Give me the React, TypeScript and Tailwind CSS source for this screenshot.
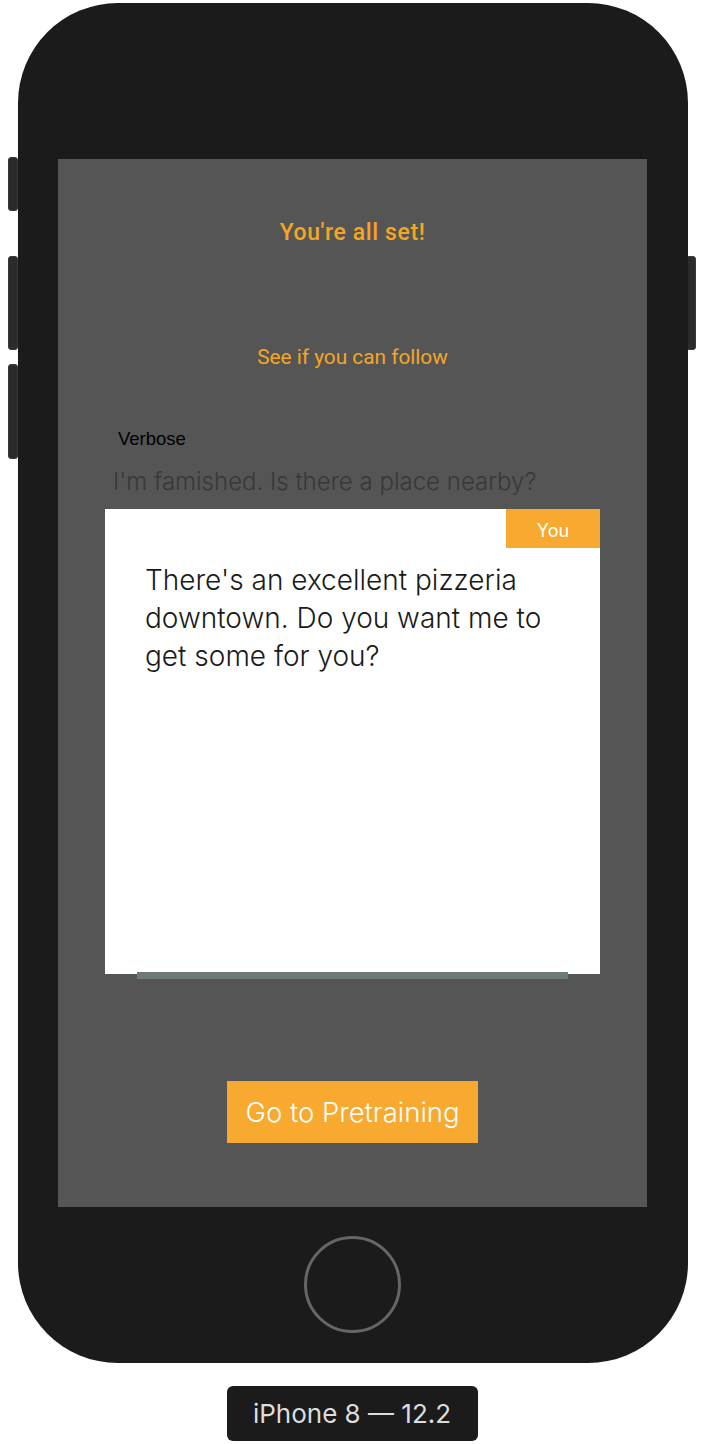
import React from "react";

const font = { fontFamily: "Inter, Roboto, 'Liberation Sans', sans-serif" };
const roboto = { fontFamily: "Roboto, 'Liberation Sans', sans-serif" };

function SideButton({ className }: { className: string }) {
  return (
    <div
      className={`absolute w-[10px] rounded-[3px] bg-[#2b2b2b] border border-[#3a3a3a] ${className}`}
    />
  );
}

export default function App() {
  return (
    <div className="min-h-screen bg-white flex flex-col items-center pt-[3px]" style={font}>
      {/* phone frame */}
      <div className="relative w-[670px] h-[1360px] ml-[1px]">
        <SideButton className="-left-[10px] top-[154px] h-[54px]" />
        <SideButton className="-left-[10px] top-[253px] h-[94px]" />
        <SideButton className="-left-[10px] top-[361px] h-[95px]" />
        <SideButton className="-right-[8px] top-[253px] h-[94px]" />

        <div className="relative w-full h-full rounded-[100px] bg-[#1b1b1b] flex flex-col items-center pt-[156px]">
          {/* screen */}
          <div className="w-[589px] h-[1048px] bg-[#555555] flex flex-col items-center">
            <div className="h-[62px]" />
            <h1 className="text-[23px] leading-[24px] font-medium tracking-[0.6px] text-[#f5a623]" style={roboto}>
              You're all set!
            </h1>
            <p className="mt-[101px] text-[20.8px] leading-[22px] text-[#f5a623]" style={roboto}>
              See if you can follow
            </p>

            <div className="self-stretch mt-[61px] pl-[60px]">
              <p className="text-[18.5px] leading-[20px] text-black" style={{ fontFamily: "'Liberation Sans', Arial, sans-serif" }}>
                Verbose
              </p>
            </div>
            <div className="self-stretch mt-[19px] pl-[55px]">
              <p className="text-[24px] leading-[28px] text-[#383838] font-light">
                I'm famished. Is there a place nearby?
              </p>
            </div>

            {/* card */}
            <div className="self-stretch mt-[13px] pl-[47px] flex flex-col">
              <div className="w-[495px] h-[465px] bg-white flex flex-col">
                <div className="self-end w-[94px] h-[39px] bg-[#f7aa2f] flex items-center justify-center">
                  <span className="text-[18px] leading-[22px] text-white pt-[4px]">You</span>
                </div>
                <p className="px-[40px] pt-[13px] text-[28px] leading-[38px] text-[#1a1a1a] font-light">
                  There's an excellent pizzeria downtown. Do you want me to get some for you?
                </p>
              </div>
              <div className="ml-[32px] -mt-[2px] w-[431px] h-[7px] bg-[#6e7a77]" />
            </div>

            <button className="mt-[102px] w-[251px] h-[62px] bg-[#f7aa2f] text-white text-[27.5px] leading-[32px] font-light">
              Go to Pretraining
            </button>
          </div>

          {/* home button */}
          <div className="mt-[29px] w-[97px] h-[97px] rounded-full border-[3px] border-[#666666]" />
        </div>
      </div>

      {/* device label */}
      <div className="mt-[23px] w-[251px] h-[55px] rounded-[6px] bg-[#1b1b1b] flex items-center justify-center">
        <span className="text-[26px] leading-[30px] text-[#dddddd]">iPhone 8 — 12.2</span>
      </div>
    </div>
  );
}
